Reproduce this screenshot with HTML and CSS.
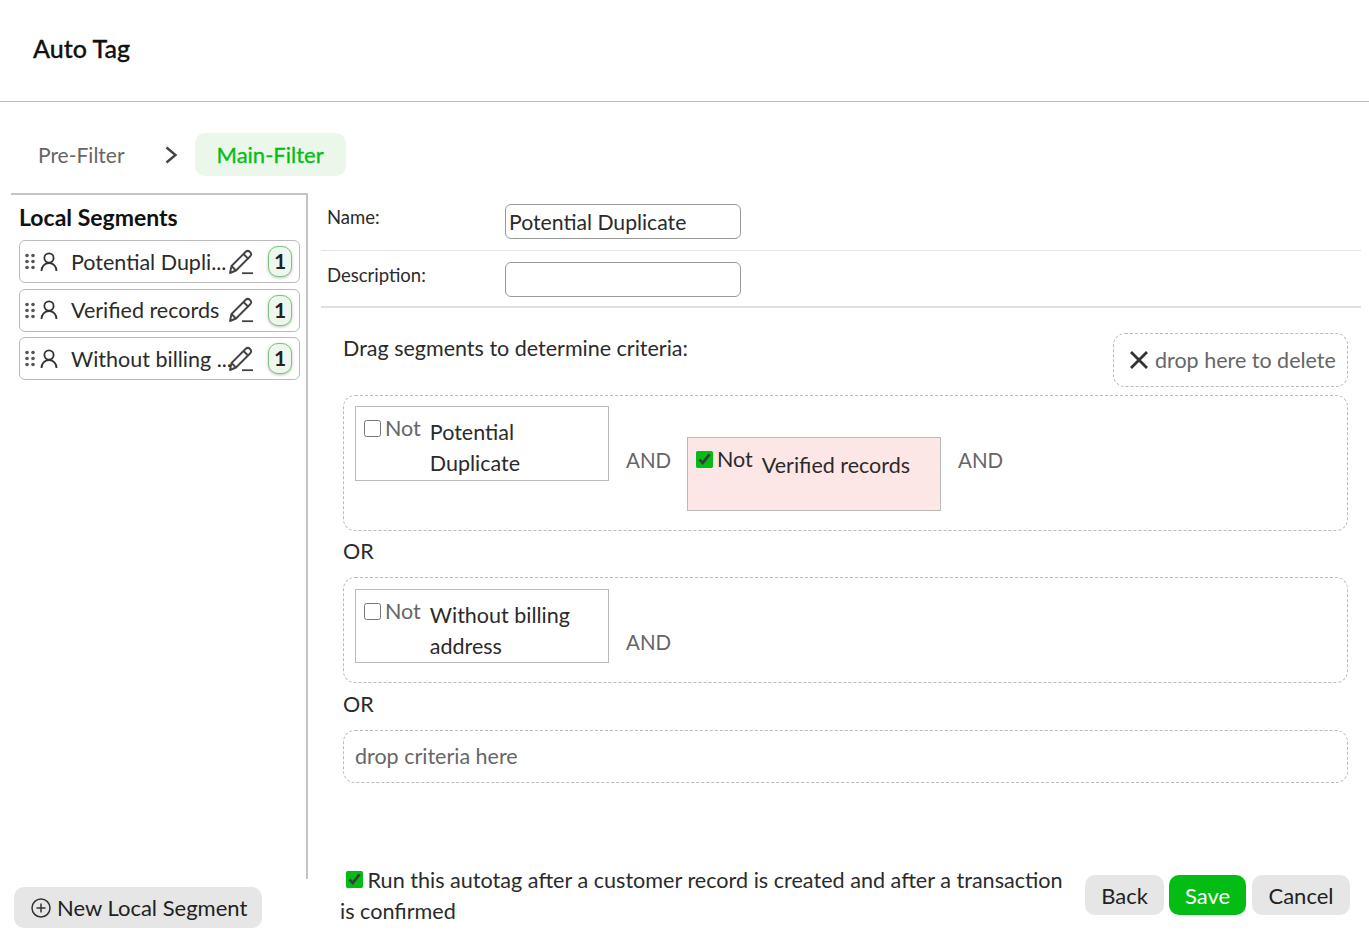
FILE: index.html
```html
<!DOCTYPE html>
<html lang="en">
<head>
  <meta charset="UTF-8">
  <meta name="viewport" content="width=device-width, initial-scale=1.0">
  <title>Auto Tag</title>
  <link rel="stylesheet" href="styles.css">
</head>
<body>
  <header class="title-bar">
    <h1>Auto Tag</h1>
  </header>

  <nav class="steps">
    <span class="step">Pre-Filter</span>
    <svg class="chevron" width="14" height="18" viewBox="0 0 14 18"><path d="M2.500 1.500l9 7.500-9 7.500" fill="none" stroke="#444" stroke-width="2.400"/></svg>
    <span class="step active">Main-Filter</span>
  </nav>

  <section class="content">
    <!-- left column -->
    <aside class="sidebar">
      <div class="panel">
        <h2>Local Segments</h2>

        <div class="segment">
          <svg class="grip" width="10" height="17" viewBox="0 0 10 17"><g fill="#555"><circle cx="2" cy="2.500" r="1.800"/><circle cx="8" cy="2.500" r="1.800"/><circle cx="2" cy="8.500" r="1.800"/><circle cx="8" cy="8.500" r="1.800"/><circle cx="2" cy="14.500" r="1.800"/><circle cx="8" cy="14.500" r="1.800"/></g></svg>
          <svg class="user" width="18" height="20" viewBox="0 0 18 20"><g fill="none" stroke="#333" stroke-width="1.800"><circle cx="9" cy="6" r="4.600"/><path d="M1.500 19c0-4.500 3-8 7.500-8s7.500 3.500 7.500 8"/></g></svg>
          <span class="segment-name">Potential Dupli...</span>
          <svg class="pencil" width="26" height="26" viewBox="0 0 26 26"><g fill="none" stroke="#444" stroke-width="1.900" stroke-linejoin="round"><path d="M2 24l1.500-7L17.500 3c1.500-1.500 3-1.500 4.500 0s1.500 3 0 4.500L8 21.500z"/><path d="M15.500 5l5 5M3.500 17l4.500 4.500"/><path d="M14 24.200h11" stroke-width="1.800"/></g></svg>
          <span class="badge">1</span>
        </div>

        <div class="segment">
          <svg class="grip" width="10" height="17" viewBox="0 0 10 17"><g fill="#555"><circle cx="2" cy="2.500" r="1.800"/><circle cx="8" cy="2.500" r="1.800"/><circle cx="2" cy="8.500" r="1.800"/><circle cx="8" cy="8.500" r="1.800"/><circle cx="2" cy="14.500" r="1.800"/><circle cx="8" cy="14.500" r="1.800"/></g></svg>
          <svg class="user" width="18" height="20" viewBox="0 0 18 20"><g fill="none" stroke="#333" stroke-width="1.800"><circle cx="9" cy="6" r="4.600"/><path d="M1.500 19c0-4.500 3-8 7.500-8s7.500 3.500 7.500 8"/></g></svg>
          <span class="segment-name">Verified records</span>
          <svg class="pencil" width="26" height="26" viewBox="0 0 26 26"><g fill="none" stroke="#444" stroke-width="1.900" stroke-linejoin="round"><path d="M2 24l1.500-7L17.500 3c1.500-1.500 3-1.500 4.500 0s1.500 3 0 4.500L8 21.500z"/><path d="M15.500 5l5 5M3.500 17l4.500 4.500"/><path d="M14 24.200h11" stroke-width="1.800"/></g></svg>
          <span class="badge">1</span>
        </div>

        <div class="segment">
          <svg class="grip" width="10" height="17" viewBox="0 0 10 17"><g fill="#555"><circle cx="2" cy="2.500" r="1.800"/><circle cx="8" cy="2.500" r="1.800"/><circle cx="2" cy="8.500" r="1.800"/><circle cx="8" cy="8.500" r="1.800"/><circle cx="2" cy="14.500" r="1.800"/><circle cx="8" cy="14.500" r="1.800"/></g></svg>
          <svg class="user" width="18" height="20" viewBox="0 0 18 20"><g fill="none" stroke="#333" stroke-width="1.800"><circle cx="9" cy="6" r="4.600"/><path d="M1.500 19c0-4.500 3-8 7.500-8s7.500 3.500 7.500 8"/></g></svg>
          <span class="segment-name">Without billing ...</span>
          <svg class="pencil" width="26" height="26" viewBox="0 0 26 26"><g fill="none" stroke="#444" stroke-width="1.900" stroke-linejoin="round"><path d="M2 24l1.500-7L17.500 3c1.500-1.500 3-1.500 4.500 0s1.500 3 0 4.500L8 21.500z"/><path d="M15.500 5l5 5M3.500 17l4.500 4.500"/><path d="M14 24.200h11" stroke-width="1.800"/></g></svg>
          <span class="badge">1</span>
        </div>
      </div>

      <button type="button" class="button new-segment">
        <svg width="20" height="20" viewBox="0 0 20 20"><g fill="none" stroke="#333" stroke-width="1.500"><circle cx="10" cy="10" r="9"/><path d="M10 5.500v9M5.500 10h9"/></g></svg>
        New Local Segment
      </button>
    </aside>

    <!-- right column -->
    <div class="main">
      <div class="field">
        <label for="name_input">Name:</label>
        <input type="text" id="name_input" value="Potential Duplicate">
      </div>
      <div class="field last">
        <label for="desc_input">Description:</label>
        <input type="text" id="desc_input">
      </div>

      <div class="criteria">
        <div class="criteria-head">
          <span>Drag segments to determine criteria:</span>
          <div class="drop delete-zone">
            <svg width="20" height="20" viewBox="0 0 20 20"><path d="M2 2l16 16M18 2L2 18" fill="none" stroke="#333" stroke-width="2.800"/></svg>
            drop here to delete
          </div>
        </div>

        <div class="drop group first">
          <div class="chip">
            <input type="checkbox">
            <span class="not">Not</span>
            <span class="chip-name">Potential Duplicate</span>
          </div>
          <span class="and">AND</span>
          <div class="chip selected">
            <input type="checkbox" checked>
            <span class="not">Not</span>
            <span class="chip-name">Verified records</span>
          </div>
          <span class="and">AND</span>
        </div>

        <p class="or">OR</p>

        <div class="drop group second">
          <div class="chip">
            <input type="checkbox">
            <span class="not">Not</span>
            <span class="chip-name">Without billing address</span>
          </div>
          <span class="and">AND</span>
        </div>

        <p class="or">OR</p>

        <div class="drop placeholder">drop criteria here</div>
      </div>

      <div class="footer">
        <p class="run-after">
          <input type="checkbox" checked>
          Run this autotag after a customer record is created and after a transaction is confirmed
        </p>
        <div class="actions">
          <button type="button" class="button back">Back</button>
          <button type="button" class="button save">Save</button>
          <button type="button" class="button cancel">Cancel</button>
        </div>
      </div>
    </div>
  </section>
</body>
</html>
```

FILE: styles.css
```css
*{
  margin: 0; padding: 0;
  box-sizing: border-box;
}

body{
  width: 1369px; height: 952px;
  overflow: hidden;
  background: white;
  color: #2b2b2b;
  font-family: "Lato", "Liberation Sans", sans-serif;
  font-size: 21.5px;
}

/* title */
.title-bar{
  height: 102px;
  border-bottom: 1px solid #bbb;
  padding: 32px 0 0 33px;
}
h1{
  font-size: 25px; font-weight: 500; line-height: 32px;
  color: #111;
  -webkit-text-stroke: 0.3px #111;
}

/* steps */
.steps{
  display: flex; align-items: center;
  height: 43px;
  margin-top: 31px;
  padding-left: 16px;
}
.step{
  padding: 0 22px;
  font-size: 21px;
  color: #666;
}
.step.active{
  height: 43px; line-height: 43px;
  background: #ecf7ec;
  border-radius: 10px;
  color: #03bd14;
  font-size: 22px;
  -webkit-text-stroke: 0.3px #03bd14;
  margin-left: 17px;
}
.chevron{
  margin-left: 17px;
}

/* columns */
.content{
  display: flex;
  margin-top: 17px;
}

/* left */
.sidebar{
  width: 297px;
  margin-left: 11px;
  flex-shrink: 0;
}
.panel{
  height: 686px;
  border-top: 2px solid #c4c4c4;
  border-right: 2px solid #c4c4c4;
  padding: 8px 6px 0 8px;
}
h2{
  font-size: 23px; font-weight: 700; line-height: 28px;
  color: #111;
  margin-bottom: 9px;
}
.segment{
  display: flex; align-items: center;
  height: 43px;
  margin-bottom: 5.500px;
  border: 1px solid #bbb;
  border-radius: 6px;
  padding-left: 5px;
}
.grip{
  flex-shrink: 0;
}
.user{
  flex-shrink: 0;
  margin-left: 5px;
}
.segment-name{
  width: 157px;
  margin-left: 13px;
  white-space: nowrap;
}
.pencil{
  flex-shrink: 0;
}
.badge{
  flex-shrink: 0;
  width: 24px; height: 31px;
  margin-left: 14px;
  border: 1.500px solid #7cc47c;
  border-radius: 10px;
  background: #edf7ed;
  box-shadow: 0 1px 3px rgba(0, 0, 0, 0.25);
  text-align: center;
  font-size: 21px; font-weight: 700; line-height: 27px;
  color: #222;
}
.button{
  height: 40px;
  border: 0;
  border-radius: 10px;
  background: #e6e6e6;
  color: #222;
  font: inherit;
  font-size: 22px;
}
.new-segment{
  display: flex; align-items: center; gap: 6px;
  width: 248px; height: 41px;
  margin: 8px 0 0 3px;
  padding-left: 17px;
}

/* right */
.main{
  width: 1040px;
  margin: 1px 0 0 13px;
}
.field{
  display: flex;
  height: 57px;
  padding: 10px 0 0 6px;
  border-bottom: 1px solid #e4e4e4;
  font-size: 18.500px;
}
.field.last{
  padding-top: 11px;
  border-bottom: 2px solid #e0e0e0;
}
.field label{
  width: 178px;
  line-height: 27px;
}
.field input{
  width: 236px; height: 35px;
  border: 1px solid #999;
  border-radius: 6px;
  padding-left: 3px;
  font: inherit; font-size: 21.200px;
  color: #2b2b2b;
}

.criteria{
  padding: 0 13px 0 22px;
}
.criteria-head{
  display: flex; justify-content: space-between; align-items: flex-start;
  margin-top: 25px;
  line-height: 30px;
}
.drop{
  border: 1px dashed #bbb;
  border-radius: 12px;
  color: #666;
}
.delete-zone{
  display: flex; align-items: center; gap: 6px;
  width: 235px; height: 54px;
  padding-left: 15px;
}
.group{
  display: flex; align-items: flex-start;
  padding: 10px 0 0 11px;
}
.group.first{
  height: 136px;
  margin-top: 8px;
}
.group.second{
  height: 106px;
  padding-top: 11px;
}
.chip{
  display: flex; align-items: flex-start;
  width: 254px; height: 75px;
  border: 1px solid #bbb;
  padding: 11px 0 0 8px;
  background: white;
  color: #2b2b2b;
}
.chip.selected{
  margin-top: 31px;
  height: 74px;
  background: #fde6e6;
}
.group.second .chip{
  height: 74px;
}
.chip input{
  width: 17px; height: 17px;
  margin-top: 2px;
  accent-color: #03bd14;
}
.not{
  margin-left: 4px;
  line-height: 20px;
  color: #666;
}
.chip.selected .not{
  color: #2b2b2b;
}
.chip-name{
  width: 170px;
  margin: -1px 0 0 9px;
  line-height: 31px;
}
.chip.selected .chip-name{
  margin-top: 1px;
}
.and{
  margin: 39px 0 0 17px;
  width: 61px;
  font-size: 20.500px;
  line-height: 30px;
  color: #666;
}
.group.second .and{
  margin-top: 38px;
}
.or{
  height: 46px;
  line-height: 41px;
}
.group.second + .or{
  height: 47px;
  line-height: 43px;
}
.placeholder{
  height: 53px;
  padding-left: 11px;
  line-height: 50px;
}

/* bottom */
.footer{
  display: flex; align-items: flex-start;
  margin-top: 82px;
}
.run-after{
  width: 764px;
  padding: 0 15px 0 19px;
  font-size: 21.600px;
  line-height: 31px;
}
.run-after input{
  width: 17px; height: 17px;
  margin: 0 -1px 2px 6px;
  accent-color: #03bd14;
}
.actions{
  display: flex; gap: 5px;
  margin-top: 10px;
}
.back{ width: 79px; }
.save{ width: 77px; background: #03bd14; color: white; }
.cancel{ width: 98px; margin-left: 1px; }
```
